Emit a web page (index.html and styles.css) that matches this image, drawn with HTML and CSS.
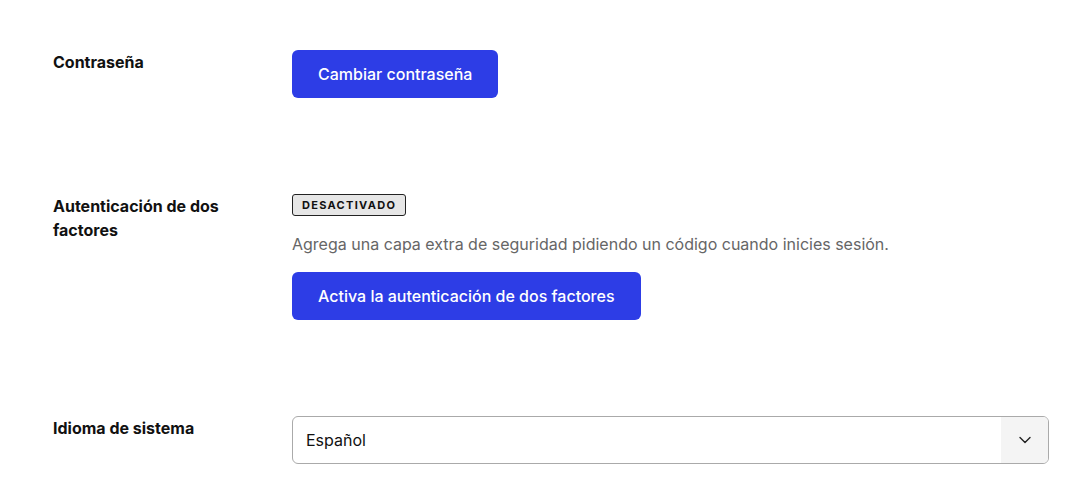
FILE: index.html
```html
<!DOCTYPE html>
<html lang="es">
<head>
  <meta charset="UTF-8" />
  <meta name="viewport" content="width=device-width, initial-scale=1" />
  <link rel="stylesheet" href="styles.css">
</head>
<body>

  <div class="settings">
    <div class="row">
      <div class="label">Contraseña</div>
      <div class="field">
        <button class="btn">Cambiar contraseña</button>
      </div>
    </div>

    <div class="row">
      <div class="label">Autenticación de dos factores</div>
      <div class="field">
        <span class="badge">DESACTIVADO</span>
        <p class="hint">Agrega una capa extra de seguridad pidiendo un código cuando inicies sesión.</p>
        <button class="btn">Activa la autenticación de dos factores</button>
      </div>
    </div>

    <div class="row">
      <div class="label">Idioma de sistema</div>
      <div class="field">
        <div class="select">
          <span class="select-value">Español</span>
          <span class="select-arrow">
            <svg width="14" height="14" viewBox="0 0 14 14" fill="none" stroke="#222" stroke-width="1.4" stroke-linecap="round" stroke-linejoin="round">
              <path d="M2 4.5 L7 9.5 L12 4.5" />
            </svg>
          </span>
        </div>
      </div>
    </div>
  </div>

</body>
</html>
```

FILE: styles.css
```css
html, body {
  margin: 0;
  padding: 0;
  background: #fff;
  font-family: Inter, "Noto Sans", sans-serif;
  color: #111;
}

.settings {
  display: flex;
  flex-direction: column;
  gap: 96px;
  padding: 50px 33px 0 53px;
}

.row {
  display: grid;
  grid-template-columns: 239px 1fr;
  align-items: start;
}

.label {
  font-size: 16px;
  font-weight: 700;
  line-height: 24px;
  max-width: 175px;
}

.field {
  display: flex;
  flex-direction: column;
  align-items: flex-start;
}

.btn {
  height: 48px;
  padding: 0 26px;
  border: none;
  border-radius: 6px;
  background: #2d3de6;
  color: #fff;
  font-family: inherit;
  font-size: 16px;
  font-weight: 500;
  cursor: pointer;
}

.badge {
  display: inline-block;
  height: 20px;
  line-height: 20px;
  padding: 0 9px;
  border: 1px solid #222;
  border-radius: 3px;
  background: #e6e6e6;
  font-size: 11px;
  font-weight: 700;
  letter-spacing: 1.3px;
  color: #111;
}

.hint {
  margin: 16px 0;
  font-size: 16px;
  line-height: 24px;
  color: #666;
}

.select {
  align-self: stretch;
  display: flex;
  height: 46px;
  border: 1px solid #aaa;
  border-radius: 6px;
  overflow: hidden;
}

.select-value {
  flex: 1;
  display: flex;
  align-items: center;
  padding-left: 13px;
  font-size: 16px;
  color: #111;
}

.select-arrow {
  width: 47px;
  display: flex;
  align-items: center;
  justify-content: center;
  background: #f4f4f4;
}
```
